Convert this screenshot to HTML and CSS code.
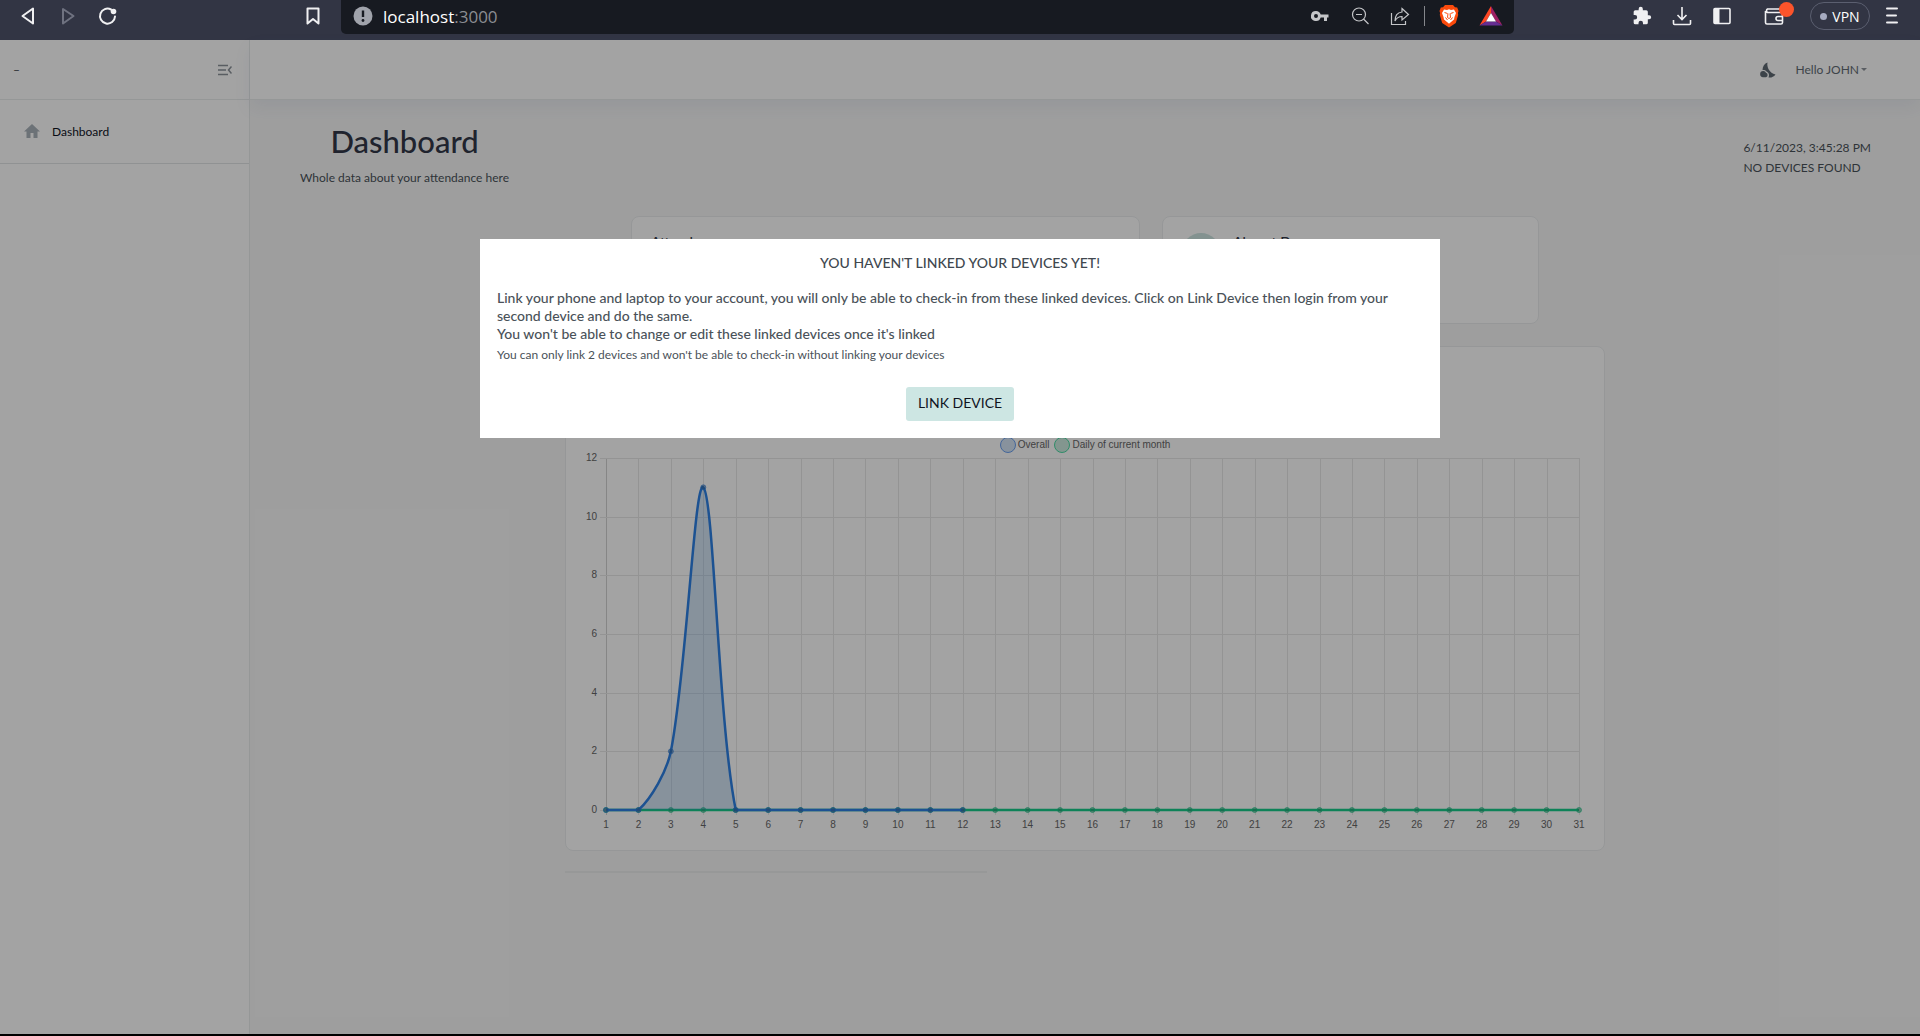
FILE: index.html
```html
<!DOCTYPE html>
<html lang="en">
<head>
<meta charset="utf-8">
<title>Dashboard</title>
<link rel="stylesheet" href="styles.css">
</head>
<body>
<div class="browser">
  <div class="nav-buttons">
    <button class="tool" aria-label="Back"><svg width="24" height="24" viewBox="0 0 24 24"><path d="M17 4.500V19.500L6.500 12z" class="ln"/></svg></button>
    <button class="tool dim" aria-label="Forward"><svg width="24" height="24" viewBox="0 0 24 24"><path d="M7 5V19.500L17.500 12z" class="ln"/></svg></button>
    <button class="tool" aria-label="Reload"><svg width="24" height="24" viewBox="0 0 24 24"><path d="M19 12.500A7.500 7.500 0 1 1 15 5.500" class="ln"/><circle cx="17.500" cy="7.500" r="2.800" fill="currentColor"/></svg></button>
  </div>
  <button class="tool bookmark" aria-label="Bookmark"><svg width="24" height="24" viewBox="0 0 24 24"><path d="M6.500 4.500H17.500V19.500L12 15L6.500 19.500z" class="ln"/></svg></button>
  <div class="address">
    <svg width="20" height="20" viewBox="0 0 20 20"><circle cx="10" cy="10" r="9.500" fill="#a0a3ab"/><path d="M10 4.500V11" stroke="#171a21" stroke-width="2.400"/><circle cx="10" cy="14.500" r="1.400" fill="#171a21"/></svg>
    <span class="url">localhost<span class="port">:3000</span></span>
    <div class="address-tools">
      <button class="tool" aria-label="Passwords"><svg width="20" height="20" viewBox="0 0 20 20"><path fill="currentColor" fill-rule="evenodd" d="M6 5a5 5 0 1 0 4.700 6.500H14V15h3v-3.500h1.500v-3H10.700A5 5 0 0 0 6 5zm0 3a2 2 0 1 1 0 4a2 2 0 0 1 0-4z"/></svg></button>
      <button class="tool" aria-label="Zoom out"><svg width="20" height="20" viewBox="0 0 20 20"><circle cx="9" cy="8.500" r="6.500" class="thin"/><path d="M6 8.500H12M13.500 13L18.500 18" class="thin"/></svg></button>
      <button class="tool" aria-label="Share"><svg width="20" height="20" viewBox="0 0 20 20"><path d="M1.500 7V18.500H15.500V15M12 2.500L18.500 8.500L12 14V10.500C8.500 10.500 6.500 12 5 15C5 10 7.500 6.500 12 6z" class="thin"/></svg></button>
      <i class="sep"></i>
      <button class="tool" aria-label="Shields"><svg width="20" height="24" viewBox="0 0 20 24"><path fill="#fb4a0c" d="M6 1h8l2 2.200 2.200.3L19.500 7l-.6 2 .3 2-2.400 8L10 23.500 3.200 19 .8 11l.3-2L.500 7l1.300-3.500L4 3.200z"/><path fill="#fff" d="M5 5.500l3 .4 2-.7 2 .7 3-.4 2 3.500-1.500 4-.5 2.500-3 2.500-2 1.800-2-1.800-3-2.500-.5-2.500L3 9z"/><path d="M5.500 8.500l3 1M14.500 8.500l-3 1M9 9.500l-.5 4 1.500 1 1.500-1-.5-4M6.500 13.500l2 2.500M13.500 13.500l-2 2.500" stroke="#fb4a0c" stroke-width="1" fill="none"/></svg></button>
      <button class="tool" aria-label="Rewards"><svg width="24" height="20" viewBox="0 0 24 20"><path fill="#ff4724" d="M12 0L.500 19.500L7 15.500L12 7z"/><path fill="#9e1f63" d="M12 0L23.500 19.500L17 15.500L12 7z"/><path fill="#662d91" d="M.500 19.500H23.500L17 15.500H7z"/><path fill="#fff" d="M12 7L17 15.500H7z"/></svg></button>
    </div>
  </div>
  <div class="extensions">
    <button class="tool" aria-label="Extensions"><svg width="20" height="20" viewBox="0 0 24 24"><path fill="currentColor" d="M20.500 11H19V7a2 2 0 0 0-2-2h-4V3.500a2.500 2.500 0 0 0-5 0V5H4a2 2 0 0 0-2 2v3.800h1.500a2.700 2.700 0 0 1 0 5.400H2V20a2 2 0 0 0 2 2h3.800v-1.500a2.700 2.700 0 0 1 5.400 0V22H17a2 2 0 0 0 2-2v-4h1.500a2.500 2.500 0 0 0 0-5z"/></svg></button>
    <button class="tool" aria-label="Downloads"><svg width="20" height="20" viewBox="0 0 20 20"><path d="M10 1V13M5.500 9L10 13.500L14.500 9M1.500 14V17.500Q1.500 18.500 2.500 18.500H17.500Q18.500 18.500 18.500 17.500V14" class="mid"/></svg></button>
    <button class="tool" aria-label="Sidebar"><svg width="20" height="20" viewBox="0 0 20 20"><rect x="2" y="2.500" width="16" height="15" rx="1" class="mid"/><path d="M2 2.500H7.500V17.500H2z" fill="currentColor"/></svg></button>
    <button class="tool wallet" aria-label="Wallet"><svg width="20" height="20" viewBox="0 0 20 20"><path d="M18.500 6V3.500Q18.500 3 17.500 3H3.500A2 2 0 0 0 3.500 6.500H17Q18.500 6.500 18.500 8V16.500Q18.500 18 17 18H3Q1.500 18 1.500 16.500V5M18.500 10.500H14A2 2 0 0 0 14 14.500H18.500" class="mid"/></svg><i class="dot"></i></button>
    <button class="vpn"><i></i>VPN</button>
    <button class="tool more" aria-label="Menu"><svg width="20" height="20" viewBox="0 0 20 20"><path d="M5 2.500H15M5 9.500H14M5 16.500H15" class="ln"/></svg></button>
  </div>
</div>

<div class="app">
  <aside class="sidebar">
    <div class="brand"><span>–</span>
      <button class="tool" aria-label="Collapse menu"><svg width="14" height="12" viewBox="0 0 14 12"><path d="M0 1.500H10M0 6H8M0 10.500H10M13.500 2.500L10.500 6L13.500 9.500" fill="none" stroke="currentColor" stroke-width="1.500"/></svg></button>
    </div>
    <nav class="menu"><a href="#"><svg width="16" height="14" viewBox="0 0 16 14"><path fill="currentColor" d="M8 0L16 7.500H13.500V14H9.500V9H6.500V14H2.500V7.500H0z"/></svg>Dashboard</a></nav>
  </aside>
  <div class="page">
    <header class="topbar">
      <button class="tool" aria-label="Dark mode"><svg width="16" height="16" viewBox="0 0 16 16"><path fill="currentColor" d="M7.500 .500C6.500 5 9.500 11 15.500 12.500C13.500 15 11.500 15.800 8.500 15.500C9.800 12.500 8.500 10.500 6.500 9.500C5.500 8.200 4 7.800 2.500 8C2.500 4.500 4.500 1.500 7.500 .500z"/><path fill="currentColor" d="M3.500 9A2.700 2.700 0 0 1 6 10.800A2.300 2.300 0 0 1 6 15.200H3A3.100 3.100 0 0 1 3.500 9z"/></svg></button>
      <button class="user">Hello JOHN<i></i></button>
    </header>
    <main>
      <div class="heading">
        <div class="title"><h1>Dashboard</h1><p>Whole data about your attendance here</p></div>
        <div class="status"><p>6/11/2023, 3:45:28 PM</p><p>NO DEVICES FOUND</p></div>
      </div>
      <div class="cards">
        <section class="card wide"><h2>Attendance</h2></section>
        <section class="card narrow"><i class="badge"></i><h2>Absent Days</h2></section>
      </div>
      <section class="card chart-card">
        <div class="legend"><span><i class="blue"></i>Overall</span><span><i class="green"></i>Daily of current month</span></div>
        <svg id="chart" viewBox="0 0 1038 390" role="img" aria-label="Attendance by day"></svg>
      </section>
      <hr>
    </main>
  </div>
  <div class="overlay">
    <div class="modal" role="dialog" aria-labelledby="modal-title">
      <h2 id="modal-title">YOU HAVEN'T LINKED YOUR DEVICES YET!</h2>
      <p class="lead">Link your phone and laptop to your account, you will only be able to check-in from these linked devices. Click on Link Device then login from your second device and do the same.<br>You won't be able to change or edit these linked devices once it's linked</p>
      <p class="note">You can only link 2 devices and won't be able to check-in without linking your devices</p>
      <button class="link-device">LINK DEVICE</button>
    </div>
  </div>
</div>
<script src="chart.js"></script>
</body>
</html>
```
FILE: styles.css
```css
* { box-sizing: border-box; }
body { margin: 0; min-height: 100vh; display: flex; flex-direction: column; background: #000; font-family: Lato, sans-serif; font-size: 12px; color: #4a5259; }
h1, h2, p { margin: 0; }
button { border: 0; padding: 0; background: none; color: inherit; font: inherit; }
svg { display: block; }
.ln { fill: none; stroke: currentColor; stroke-width: 2; stroke-linejoin: round; stroke-linecap: round; }
.mid { fill: none; stroke: currentColor; stroke-width: 1.6; }
.thin { fill: none; stroke: currentColor; stroke-width: 1.2; }
.tool { display: flex; align-items: center; justify-content: center; flex: none; }

.browser { height: 40px; flex: none; display: flex; align-items: flex-start; background: #323544; color: #f0f0f2; }
.nav-buttons { display: flex; gap: 16px; padding: 4px 0 0 16px; }
.dim { color: #6f7280; }
.bookmark { margin: 4px 16px 0 auto; }
.address { width: 1173px; height: 34px; display: flex; align-items: center; gap: 10px; padding: 0 11px 2px 12px; background: #171a21; border-radius: 0 0 5px 5px; }
.url { font: 17px "Open Sans", sans-serif; color: #fff; }
.port { color: #8b8d92; }
.address-tools { margin-left: auto; display: flex; align-items: center; gap: 20px; color: #c4c5c8; }
.sep { width: 1px; height: 20px; margin: 0 -6px; background: #85878c; }
.extensions { width: 406px; height: 32px; display: flex; align-items: center; justify-content: flex-end; gap: 20px; padding-right: 18px; }
.wallet { position: relative; margin: 0 6px 0 12px; }
.more { margin-left: -8px; }
.dot { position: absolute; left: 15px; top: -4px; width: 15px; height: 15px; border-radius: 50%; background: #fb542b; }
.vpn { width: 60px; height: 28px; display: flex; align-items: center; justify-content: center; gap: 5px; border: 1px solid #5b5f70; border-radius: 14px; font: 14px "Open Sans", sans-serif; color: #fff; }
.vpn i { width: 7px; height: 7px; border-radius: 50%; background: #a6abc0; }

.app { position: relative; flex: 1; display: flex; margin-bottom: 2px; background: #f8f8f8; }
.sidebar { width: 250px; flex: none; background: #fff; border-right: 1px solid #e9ecec; }
.brand { height: 60px; display: flex; align-items: center; justify-content: space-between; padding: 0 17px 0 13px; border-bottom: 1px solid #e9ecec; color: #8b9299; }
.brand span { color: #41484f; }
.menu { height: 64px; border-bottom: 1px solid #e2e5e6; }
.menu a { height: 62px; display: flex; align-items: center; gap: 12px; padding-left: 24px; color: #10141f; text-decoration: none; }
.menu svg { color: #aab2ba; }
.page { flex: 1; min-width: 0; }
.topbar { height: 60px; display: flex; align-items: center; justify-content: flex-end; gap: 19px; padding-right: 53px; background: #fff; border-bottom: 1px solid #e9ecec; box-shadow: 0 8px 16px rgba(80, 100, 160, .08); color: #626b74; }
.topbar .tool { color: #5f6973; }
.user { display: flex; align-items: center; gap: 2px; }
.user i { border: 3px solid transparent; border-top-color: #8b9299; border-bottom: 0; }
.heading { display: flex; justify-content: space-between; align-items: flex-start; padding: 23px 49px 0 50px; }
.title { text-align: center; }
h1 { font: 500 31px/36px Lato, sans-serif; color: #323848; }
.title p { padding-top: 9px; line-height: 20px; font-size: 12px; }
.status { padding-top: 15px; line-height: 20px; }
.cards { display: flex; justify-content: center; gap: 22px; padding: 28px 0 22px; }
.card { background: #fff; border: 1px solid #ebedee; border-radius: 8px; }
.wide { width: 509px; height: 108px; padding: 16px 19px; }
.narrow { width: 377px; height: 108px; display: flex; gap: 13px; padding: 16px 19px; }
.card h2 { font: 500 14px/18px Lato, sans-serif; color: #323848; }
.badge { width: 38px; height: 38px; border-radius: 50%; background: #cde5e1; }
.chart-card { width: 1040px; height: 505px; margin: 0 auto; padding-top: 90px; }
.legend { display: flex; justify-content: center; gap: 5px; font: 10px/16px "Liberation Sans", sans-serif; color: #666; }
.legend span { display: flex; align-items: center; gap: 2px; }
.legend i { width: 16px; height: 16px; border-radius: 50%; border: 1px solid #6aa0f0; background: #d5e4f6; }
.legend .green { border-color: #4bdca5; background: #cdebe0; }
#chart { width: 100%; }
.axis-text { font: 10px "Liberation Sans", sans-serif; fill: #666; }
hr { width: 422px; height: 2px; margin: 20px 0 0 315px; border: 0; background: #eceeee; }

.overlay { position: absolute; inset: 0; display: flex; align-items: flex-start; justify-content: center; padding-top: 199px; background: rgba(0, 0, 0, .36); }
.modal { width: 50%; padding: 16px 17px 17px; display: flex; flex-direction: column; background: #fff; }
.modal h2 { text-align: center; font: 500 14px/16px Lato, sans-serif; color: #41484f; }
.lead { padding-top: 18px; font-size: 14px; line-height: 18px; font-weight: 500; }
.note { padding-top: 3px; line-height: 18px; font-size: 12px; }
.link-device { align-self: center; width: 108px; height: 34px; margin-top: 23px; padding-bottom: 3px; border-radius: 3px; background: #cde6e3; color: #10141f; font-size: 14px; }
```
FILE: chart.js
```js
const ns = "http://www.w3.org/2000/svg";
const svg = document.getElementById("chart");
const left = 40, top0 = 5, bottom = 357, right = 1013;
const px = n => left + (n - 1) * (right - left) / 30;
const py = v => bottom - v * (bottom - top0) / 12;

function add(name, attrs, text) {
  const el = document.createElementNS(ns, name);
  for (const k in attrs) el.setAttribute(k, attrs[k]);
  if (text !== undefined) el.textContent = text;
  svg.appendChild(el);
}

for (let d = 1; d <= 31; d++) {
  const x = Math.round(px(d));
  add("path", { d: `M${x + .5} ${top0}V${bottom + 5}`, stroke: d === 1 ? "#d2d2d2" : "#e8e8e8" });
  add("text", { x: px(d), y: 375, "text-anchor": "middle", class: "axis-text" }, d);
}
for (let v = 0; v <= 12; v += 2) {
  const y = Math.round(py(v));
  add("path", { d: `M${left - 6} ${y + .5}H${right}`, stroke: "#e8e8e8" });
  add("text", { x: left - 9, y: y + 3, "text-anchor": "end", class: "axis-text" }, v);
}

function series(values, tension, line, fill, dot) {
  const p = values.map((v, i) => ({ x: px(i + 1), y: py(v) }));
  const cap = y => Math.min(bottom, Math.max(top0, y));
  const cp = p.map((c, i) => {
    const a = p[i - 1] || c, b = p[i + 1] || c;
    const d1 = Math.hypot(c.x - a.x, c.y - a.y), d2 = Math.hypot(b.x - c.x, b.y - c.y);
    const f1 = tension * d1 / (d1 + d2), f2 = tension * d2 / (d1 + d2);
    return [c.x - f1 * (b.x - a.x), cap(c.y - f1 * (b.y - a.y)), c.x + f2 * (b.x - a.x), cap(c.y + f2 * (b.y - a.y))];
  });
  let d = `M${p[0].x} ${p[0].y}`;
  for (let i = 1; i < p.length; i++)
    d += `C${cp[i - 1][2]} ${cp[i - 1][3]} ${cp[i][0]} ${cp[i][1]} ${p[i].x} ${p[i].y}`;
  add("path", { d: d + `V${bottom}H${left}Z`, fill });
  add("path", { d, fill: "none", stroke: line, "stroke-width": 2.5, "stroke-linejoin": "round" });
  for (const c of p) add("circle", { cx: c.x, cy: c.y, r: 2.5, fill: dot, stroke: line, "stroke-opacity": .6 });
}

series(Array(31).fill(0), .4, "#17cc8a", "none", "rgba(40,150,110,.5)");
series([0, 0, 2, 11, 0, 0, 0, 0, 0, 0, 0, 0], .3, "#2d80e4", "rgba(54,130,210,.22)", "rgba(50,100,150,.5)");
```
